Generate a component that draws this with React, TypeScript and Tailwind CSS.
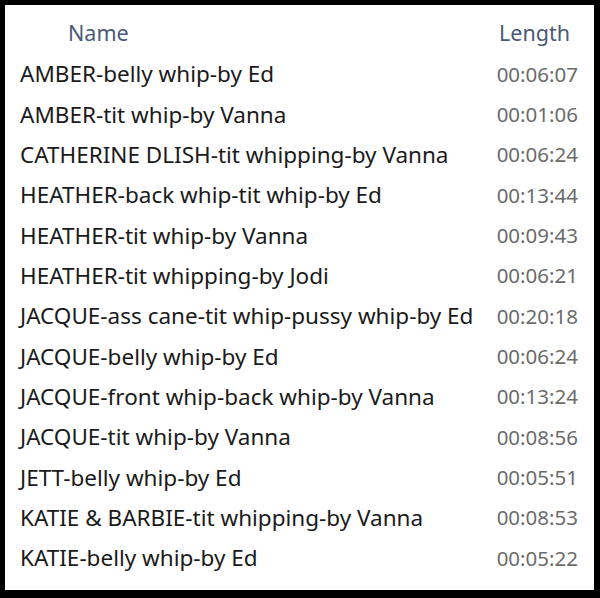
import React from 'react';

const rows: [string, string][] = [
  ['AMBER-belly whip-by Ed', '00:06:07'],
  ['AMBER-tit whip-by Vanna', '00:01:06'],
  ['CATHERINE DLISH-tit whipping-by Vanna', '00:06:24'],
  ['HEATHER-back whip-tit whip-by Ed', '00:13:44'],
  ['HEATHER-tit whip-by Vanna', '00:09:43'],
  ['HEATHER-tit whipping-by Jodi', '00:06:21'],
  ['JACQUE-ass cane-tit whip-pussy whip-by Ed', '00:20:18'],
  ['JACQUE-belly whip-by Ed', '00:06:24'],
  ['JACQUE-front whip-back whip-by Vanna', '00:13:24'],
  ['JACQUE-tit whip-by Vanna', '00:08:56'],
  ['JETT-belly whip-by Ed', '00:05:51'],
  ['KATIE & BARBIE-tit whipping-by Vanna', '00:08:53'],
  ['KATIE-belly whip-by Ed', '00:05:22'],
];

export default function App() {
  return (
    <div className="w-[600px] h-[598px] bg-black pt-[5px] pl-[5px] pr-[6px] pb-[8px]">
      <div
        className="h-full bg-white flex flex-col"
        style={{ fontFamily: '"Noto Sans", "Open Sans", sans-serif' }}
      >
        <div className="flex items-center h-[56px] -mb-[7px] text-[21.5px] text-[#4a5a78]">
          <div className="pl-[63px] flex-1">Name</div>
          <div className="w-[110px] pr-[24px] text-right">Length</div>
        </div>
        <div className="flex flex-col">
          {rows.map(([name, len]) => (
            <div key={name} className="flex items-center h-[40.33px]">
              <div className="pl-[15px] flex-1 text-[22.5px] text-[#1a1a1a] whitespace-nowrap">{name}</div>
              <div className="w-[110px] pr-[16px] text-right text-[20.5px] text-[#6b6b6b]">{len}</div>
            </div>
          ))}
        </div>
      </div>
    </div>
  );
}
